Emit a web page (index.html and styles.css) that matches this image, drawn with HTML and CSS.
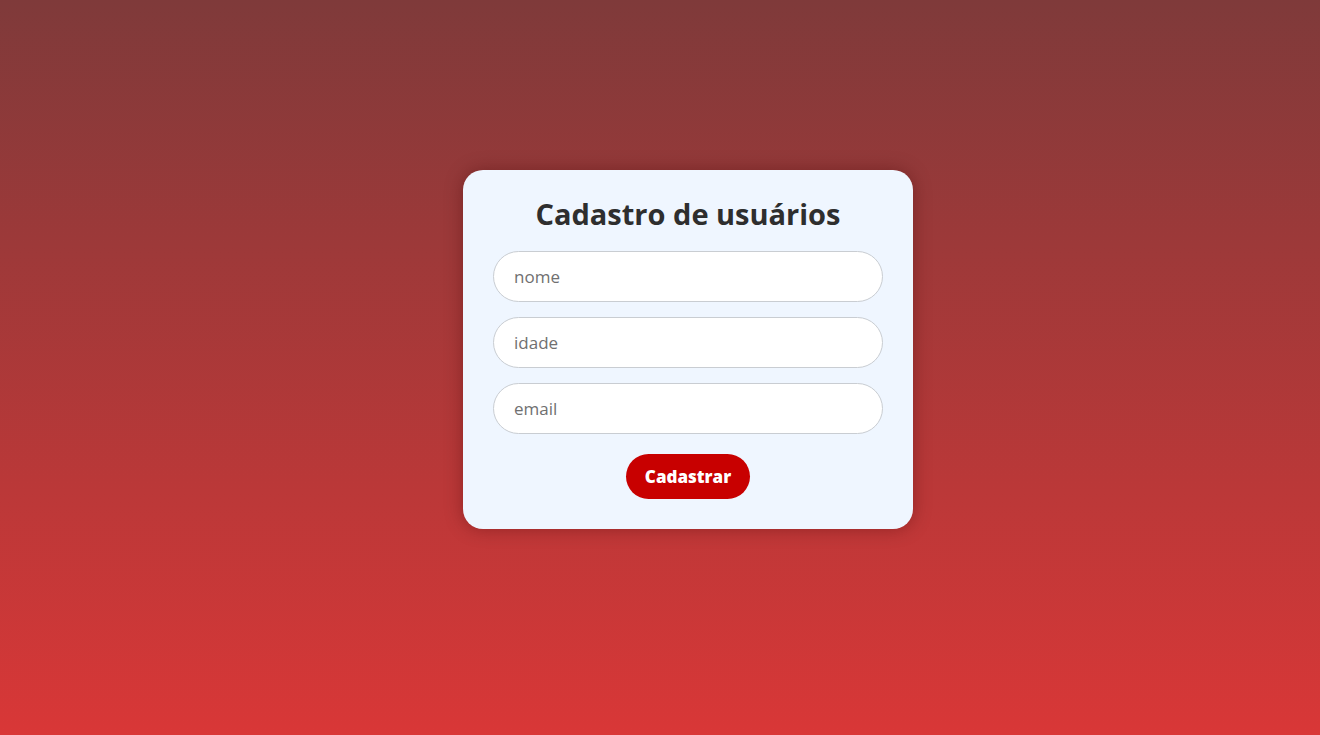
FILE: index.html
```html
<!DOCTYPE html>
<html lang="pt-BR">
<head>
<meta charset="utf-8">
<title>Cadastro de usuários</title>
<link rel="stylesheet" href="styles.css">
</head>
<body>
<main class="page">
  <form class="card">
    <h1 class="title">Cadastro de usuários</h1>
    <input class="field" type="text" placeholder="nome">
    <input class="field" type="text" placeholder="idade">
    <input class="field" type="text" placeholder="email">
    <button class="btn" type="button">Cadastrar</button>
  </form>
</main>
</body>
</html>
```

FILE: styles.css
```css
* { box-sizing: border-box; }
html, body { margin: 0; height: 100%; }
body {
  font-family: "Open Sans", "Noto Sans", sans-serif;
  background: linear-gradient(to bottom, #7f3a3a 0%, #d93737 100%);
}
.page {
  min-height: 100%;
  display: flex;
  align-items: center;
  justify-content: center;
  padding: 0 0 36px 56px;
}
.card {
  width: 450px;
  background: #eff6ff;
  border-radius: 20px;
  padding: 24px 30px 30px;
  display: flex;
  flex-direction: column;
  align-items: center;
  box-shadow: 0 0 18px rgba(60, 0, 0, 0.35);
}
.title {
  margin: 0 0 17px;
  font-size: 29px;
  line-height: 40px;
  font-weight: 700;
  color: #2e2e2e;
  letter-spacing: 0;
}
.field {
  width: 100%;
  height: 51px;
  border: 1px solid #c9cdd2;
  border-radius: 26px;
  background: #fff;
  padding: 0 20px;
  font-family: inherit;
  font-size: 17px;
  color: #333;
  margin-bottom: 15px;
  outline: none;
}
.field::placeholder { color: #707070; }
.btn {
  margin-top: 5px;
  width: 124px;
  height: 45px;
  border: none;
  border-radius: 23px;
  background: #c80000;
  color: #fff;
  font-family: inherit;
  font-weight: 800;
  font-size: 17px;
  cursor: pointer;
}
```
